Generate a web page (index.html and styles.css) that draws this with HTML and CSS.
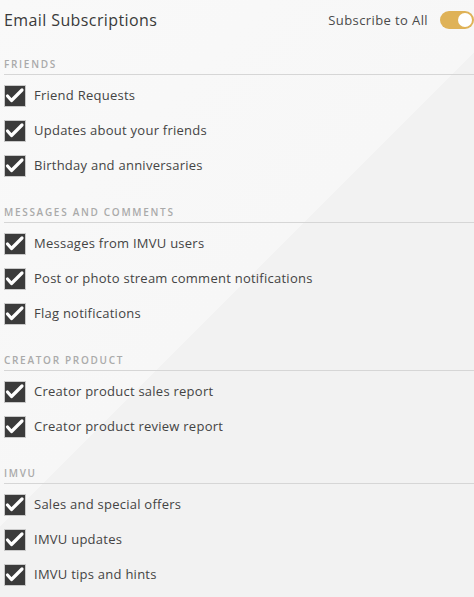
FILE: index.html
```html
<!DOCTYPE html>
<html>
<head>
<meta charset="utf-8">
<link rel="stylesheet" href="styles.css">
</head>
<body>
<div class="page">
  <header class="top">
    <h1 class="title">Email Subscriptions</h1>
    <div class="suball">
      <span class="suball-label">Subscribe to All</span>
      <span class="toggle"><span class="knob"></span></span>
    </div>
  </header>

  <section class="group">
    <h2 class="group-head">FRIENDS</h2>
    <ul class="items">
      <li class="item"><span class="box"><svg viewBox="0 0 20 20" class="tick"><path d="M2.5 10 L6.5 14.5 L17 4" /></svg></span><span class="label">Friend Requests</span></li>
      <li class="item"><span class="box"><svg viewBox="0 0 20 20" class="tick"><path d="M2.5 10 L6.5 14.5 L17 4" /></svg></span><span class="label">Updates about your friends</span></li>
      <li class="item"><span class="box"><svg viewBox="0 0 20 20" class="tick"><path d="M2.5 10 L6.5 14.5 L17 4" /></svg></span><span class="label">Birthday and anniversaries</span></li>
    </ul>
  </section>

  <section class="group">
    <h2 class="group-head">MESSAGES AND COMMENTS</h2>
    <ul class="items">
      <li class="item"><span class="box"><svg viewBox="0 0 20 20" class="tick"><path d="M2.5 10 L6.5 14.5 L17 4" /></svg></span><span class="label">Messages from IMVU users</span></li>
      <li class="item"><span class="box"><svg viewBox="0 0 20 20" class="tick"><path d="M2.5 10 L6.5 14.5 L17 4" /></svg></span><span class="label">Post or photo stream comment notifications</span></li>
      <li class="item"><span class="box"><svg viewBox="0 0 20 20" class="tick"><path d="M2.5 10 L6.5 14.5 L17 4" /></svg></span><span class="label">Flag notifications</span></li>
    </ul>
  </section>

  <section class="group">
    <h2 class="group-head">CREATOR PRODUCT</h2>
    <ul class="items">
      <li class="item"><span class="box"><svg viewBox="0 0 20 20" class="tick"><path d="M2.5 10 L6.5 14.5 L17 4" /></svg></span><span class="label">Creator product sales report</span></li>
      <li class="item"><span class="box"><svg viewBox="0 0 20 20" class="tick"><path d="M2.5 10 L6.5 14.5 L17 4" /></svg></span><span class="label">Creator product review report</span></li>
    </ul>
  </section>

  <section class="group">
    <h2 class="group-head">IMVU</h2>
    <ul class="items">
      <li class="item"><span class="box"><svg viewBox="0 0 20 20" class="tick"><path d="M2.5 10 L6.5 14.5 L17 4" /></svg></span><span class="label">Sales and special offers</span></li>
      <li class="item"><span class="box"><svg viewBox="0 0 20 20" class="tick"><path d="M2.5 10 L6.5 14.5 L17 4" /></svg></span><span class="label">IMVU updates</span></li>
      <li class="item"><span class="box"><svg viewBox="0 0 20 20" class="tick"><path d="M2.5 10 L6.5 14.5 L17 4" /></svg></span><span class="label">IMVU tips and hints</span></li>
    </ul>
  </section>
</div>
</body>
</html>
```

FILE: styles.css
```css
html, body {
  margin: 0;
  padding: 0;
}
body {
  font-family: "Open Sans", "Liberation Sans", sans-serif;
  color: #444;
}
.page {
  width: 474px;
  height: 597px;
  overflow: hidden;
  background: linear-gradient(135deg, #f9f9f9 0px, #f7f7f7 372px, #f2f2f2 372px, #f2f2f2 100%);
  box-sizing: border-box;
  padding-left: 4px;
}
.top {
  height: 40px;
  display: flex;
  align-items: center;
  justify-content: space-between;
}
.title {
  margin: 0;
  font-size: 16px;
  font-weight: 400;
  letter-spacing: 0.4px;
  color: #3a3a3a;
}
.suball {
  display: flex;
  align-items: center;
  gap: 12px;
}
.suball-label {
  font-size: 13px;
  letter-spacing: 0.4px;
  color: #4a4a4a;
}
.toggle {
  width: 34px;
  height: 18px;
  border-radius: 9px;
  background: #dfb257;
  display: flex;
  align-items: center;
  justify-content: flex-end;
  padding-right: 2px;
  box-sizing: border-box;
}
.knob {
  width: 14px;
  height: 14px;
  border-radius: 50%;
  background: #fff;
}
.group {
  margin-top: 16px;
}
.group + .group {
  margin-top: 14px;
}
.group-head {
  margin: 0;
  height: 19px;
  box-sizing: border-box;
  padding-top: 0;
  font-size: 10px;
  line-height: 16px;
  font-weight: 600;
  letter-spacing: 1.7px;
  color: #aaa;
  border-bottom: 1px solid #d6d6d6;
}
.items {
  list-style: none;
  margin: 0;
  padding: 10px 0 0 0;
}
.item {
  height: 35px;
  display: flex;
  align-items: flex-start;
  gap: 8px;
}
.box {
  width: 22px;
  height: 22px;
  box-sizing: border-box;
  border: 1px solid #c9c9c9;
  background: #3b3b3b;
  display: block;
}
.tick {
  display: block;
  width: 20px;
  height: 20px;
}
.tick path {
  fill: none;
  stroke: #fff;
  stroke-width: 3.2;
  stroke-linecap: round;
  stroke-linejoin: round;
}
.label {
  font-size: 13px;
  line-height: 20px;
  letter-spacing: 0.25px;
  color: #444;
}
```
